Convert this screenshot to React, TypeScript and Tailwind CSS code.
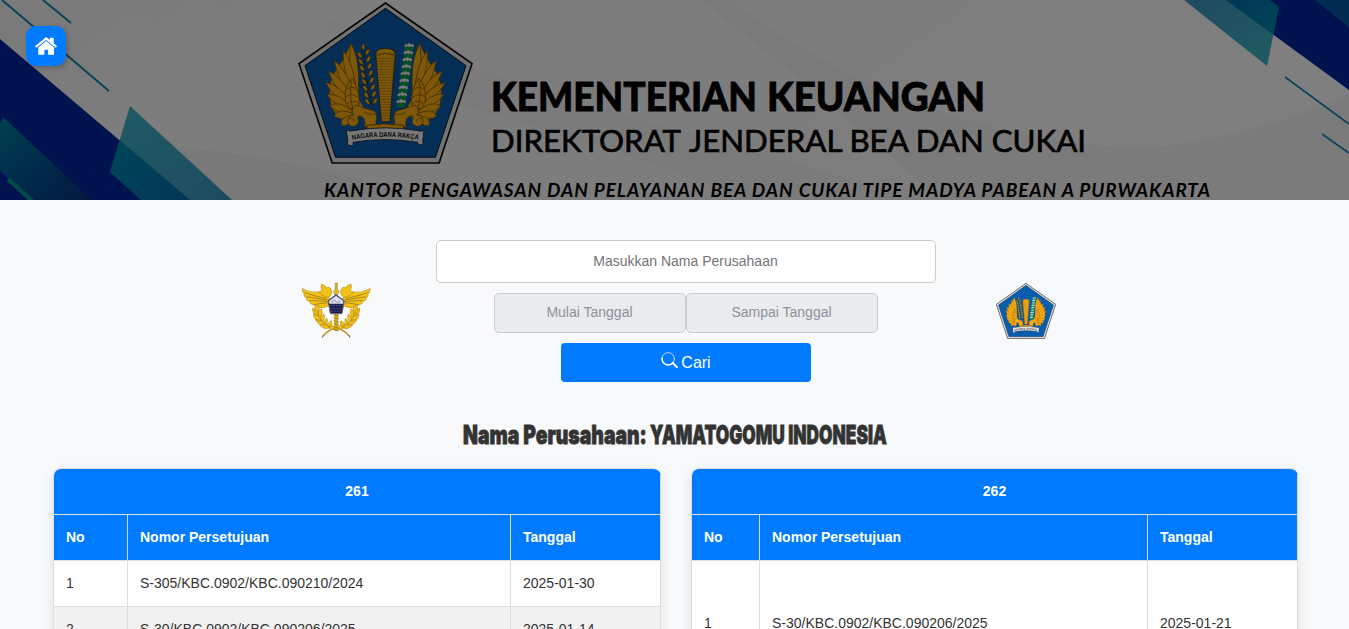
import React from 'react';

const featherTips = [
  [183, 131],
  [160, 152],
  [134, 182],
  [116, 214],
  [108, 249],
  [112, 285],
  [120, 319],
  [133, 350],
  [156, 378],
];

function feather(x: number, y: number, i: number) {
  const rx = 204 - i * 2;
  const ry = 300 + i * 6;
  const dx = x - rx;
  const dy = y - ry;
  const len = Math.hypot(dx, dy);
  const nx = (-dy / len) * 17;
  const ny = (dx / len) * 17;
  return `M${rx} ${ry} Q${rx + dx * 0.5 - nx * 1.3} ${ry + dy * 0.5 - ny * 1.3} ${x} ${y} Q${rx + dx * 0.68 + nx * 1.5} ${ry + dy * 0.68 + ny * 1.5} ${rx} ${ry}Z`;
}

function Wing() {
  return (
    <g fill="#fcae12" stroke="#6b4c08" strokeWidth="2" strokeLinejoin="round">
      <path d="M184 132 Q204 200 209 300 L226 332 L190 372 Q145 368 125 320 Q112 270 130 225 Q160 185 184 132Z" />
      {featherTips.map(([x, y], i) => (
        <path key={i} d={feather(x, y, i)} />
      ))}
      <path d="M187 235 Q160 268 168 308 Q180 334 206 328 Q216 280 187 235Z" />
      <path d="M170 270 Q188 256 200 270 M166 292 Q186 278 204 292 M172 312 Q190 298 207 312 M186 244 Q178 286 190 330" fill="none" />
      <path d="M198 316 Q222 326 252 333 Q266 344 258 366 L262 382 L225 382 Q228 354 214 350 Q202 344 204 356 Q213 372 194 380 Q174 381 174 362 Q176 346 194 346 Q180 334 198 316Z" />
      <path d="M177 358 Q190 350 194 365 M224 336 Q236 346 260 344" fill="none" />
    </g>
  );
}

const grains = Array.from({ length: 9 }, (_, i) => i);

function Emblem({ x, y, width, height }: { x?: number; y?: number; width: number; height: number }) {
  return (
    <svg x={x} y={y} width={width} height={height} viewBox="26 7 522 486" preserveAspectRatio="none">
      <path d="M287 10 L545 192 L447 490 L128 490 L29 192Z" fill="#e4e4e4" stroke="#080808" strokeWidth="5" />
      <path d="M287 26 L527 198 L436 473 L138 473 L47 198Z" fill="#0a5cac" stroke="#101c2c" strokeWidth="3" />
      <Wing />
      <g transform="translate(573 0) scale(-1 1)">
        <Wing />
      </g>
      <path d="M258 165 Q257 147 286 146 Q317 147 316 165 L300 366 L275 366Z" fill="#fcae12" stroke="#3b2c08" strokeWidth="2.5" />
      <path d="M260 169 Q264 160 270 166 Q275 155 281 165 Q287 155 293 165 Q300 156 305 166 Q311 160 314 169" fill="none" stroke="#3b2c08" strokeWidth="2" />
      {Array.from({ length: 23 }, (_, i) => (
        <path
          key={i}
          d={`M${259 + i * 0.72} ${176 + i * 8.2} H${315 - i * 0.67}`}
          stroke="#8a6413"
          strokeWidth="1.6"
        />
      ))}
      <path d="M221 139 Q228 240 249 326" fill="none" stroke="#3b2c08" strokeWidth="2" />
      <g fill="#fcae12" stroke="#3b2c08" strokeWidth="1.8">
        <ellipse cx="221" cy="142" rx="5" ry="9" />
        {grains.slice(0, 8).map((i) => (
          <g key={i}>
            <ellipse cx={210 + i * 3.3} cy={166 + i * 20} rx="5" ry="10" transform={`rotate(-32 ${210 + i * 3.3} ${166 + i * 20})`} />
            <ellipse cx={233 + i * 3.3} cy={157 + i * 21} rx="5" ry="10" transform={`rotate(28 ${233 + i * 3.3} ${157 + i * 21})`} />
          </g>
        ))}
      </g>
      <g>
        <path d="M358 134 L330 325" stroke="#14793f" strokeWidth="8" />
        {grains.map((i) => {
          const cx = 358 - i * 3;
          const cy = 139 + i * 21;
          return (
            <g key={i}>
              <path d={`M${cx - 14} ${cy + 1} H${cx + 14} L${cx + 12} ${cy + 15} Q${cx} ${cy + 20} ${cx - 12} ${cy + 15}Z`} fill="#0f9a48" />
              <path
                d={`M${cx - 15} ${cy + 1} Q${cx - 12} ${cy - 8} ${cx - 5} ${cy - 5} Q${cx} ${cy - 11} ${cx + 5} ${cy - 5} Q${cx + 12} ${cy - 8} ${cx + 15} ${cy + 1} L${cx + 10} ${cy + 4} L${cx + 5} ${cy} L${cx} ${cy + 4} L${cx - 5} ${cy} L${cx - 10} ${cy + 4}Z`}
                fill="#f0f0f0"
              />
            </g>
          );
        })}
      </g>
      <path d="M232 377 Q286 368 341 377 L342 389 Q286 382 231 389Z" fill="#fcae12" stroke="#3b2c08" strokeWidth="2" />
      <path
        d="M170 391 Q178 396 190 393 Q286 376 384 393 Q395 397 402 391 Q399 403 400 410 Q397 422 399 433 Q391 437 382 433 L384 428 Q286 411 190 428 L191 437 Q181 440 173 433 Q177 421 173 412Z"
        fill="#f0f0f0"
        stroke="#222"
        strokeWidth="2.5"
      />
      <path id="motto" d="M188 421 Q286 402 388 421" fill="none" />
      <text fontFamily="Liberation Sans, Arial, sans-serif" fontWeight="700" fontSize="21" fill="#111" textLength="198" lengthAdjust="spacingAndGlyphs">
        <textPath href="#motto">NAGARA DANA RAKÇA</textPath>
      </text>
    </svg>
  );
}

function CustomsHalf() {
  return (
    <g fill="#f2c21a" stroke="#b98c12" strokeWidth="2" strokeLinejoin="round">
      <path d="M37 56 Q60 70 88 66 Q110 68 122 91 L121 104 Q104 116 81 113 Q72 110 72 104 Q59 103 59 95 Q47 92 49 84 Q41 80 43 72 Q36 65 37 56Z" />
      <path d="M44 68 Q78 80 111 86 M50 80 Q80 86 112 90 M60 92 Q84 92 113 94 M72 104 Q94 99 116 98" fill="none" stroke="#8a6a14" strokeWidth="2" />
      <path d="M94 43 Q106 44 109 54 Q121 48 124 61 Q128 74 116 82 Q95 80 88 66 L96 62 Q91 52 94 43Z" />
      <path d="M82 104 Q93 117 82 131 Q64 122 82 104Z M68 115 Q86 120 87 139 Q66 135 68 115Z M94 116 Q101 131 90 141 Q76 129 94 116Z M70 132 Q90 136 95 153 Q71 154 70 132Z M102 132 Q108 147 96 155 Q84 143 102 132Z M77 149 Q98 147 107 163 Q87 171 77 149Z M111 145 Q116 158 105 167 Q95 157 111 145Z M89 166 Q106 157 122 170 Q106 183 89 166Z M124 152 Q130 166 116 173 Q105 162 124 152Z M114 172 Q126 162 136 172 Q127 185 114 172Z" />
      <path d="M137 174 Q113 181 98 199" fill="none" stroke="#c2952a" strokeWidth="4" />
      <path d="M100 196 L97 202" stroke="#554b45" strokeWidth="3" />
    </g>
  );
}

function CustomsLogo() {
  return (
    <svg className="h-20 w-[95px]" viewBox="0 0 285 240">
      <ellipse cx="138" cy="138" rx="42" ry="34" fill="#fff" />
      <CustomsHalf />
      <g transform="translate(277 0) scale(-1 1)">
        <CustomsHalf />
      </g>
      <path d="M136 39 L142 39 L142 59 L148 64 L143 71 L143 182 L134 182 L134 71 L130 64 L136 59Z" fill="#e4b322" stroke="#8f7224" strokeWidth="1.5" />
      {[134, 143, 152, 161, 170, 178].map((y) => (
        <path key={y} d={`M131 ${y} L146 ${y + 4}`} stroke="#b88d14" strokeWidth="4" />
      ))}
      <path d="M138 74 L163 92 L156 131 L121 131 L114 92Z" fill="#1d1f47" stroke="#666878" strokeWidth="3" />
      <path d="M117 93 L138 77 L160 93 L159 101 L118 101Z" fill="#dfe1ee" />
      <path d="M119 106 H157 M121 115 H155 M123 123 H153" stroke="#4a4aa0" strokeWidth="3" strokeDasharray="6 3" />
      <path d="M124 96 L134 91 L141 97 L152 94" stroke="#9196aa" strokeWidth="3" fill="none" />
    </svg>
  );
}

function Banner() {
  return (
    <svg className="block h-[200px] w-[1349px]" viewBox="0 0 1349 200">
      <defs>
        <linearGradient id="teal" x1="0" y1="0" x2="1" y2="1">
          <stop offset="0" stopColor="#00a0b4" />
          <stop offset="1" stopColor="#0076b4" />
        </linearGradient>
        <linearGradient id="tealUnder" x1="0" y1="0" x2="1" y2="1">
          <stop offset="0" stopColor="#00a0b4" />
          <stop offset="1" stopColor="#0070b0" />
        </linearGradient>
        <linearGradient id="tealBack" x1="1" y1="1" x2="0" y2="0">
          <stop offset="0" stopColor="#00a0b4" />
          <stop offset="1" stopColor="#0074ad" />
        </linearGradient>
        <linearGradient id="deep" x1="0" y1="0" x2="1" y2="1">
          <stop offset="0" stopColor="#00809c" />
          <stop offset="0.45" stopColor="#005a98" />
          <stop offset="1" stopColor="#04307c" />
        </linearGradient>
        <linearGradient id="paper" x1="0" y1="0" x2="1" y2="0.2">
          <stop offset="0" stopColor="#f4f4f4" />
          <stop offset="0.22" stopColor="#fbfbfb" />
          <stop offset="0.6" stopColor="#fafafa" />
          <stop offset="1" stopColor="#ffffff" />
        </linearGradient>
        <linearGradient id="fold" x1="0" y1="0" x2="1" y2="0">
          <stop offset="0" stopColor="#f0f0f0" stopOpacity="0" />
          <stop offset="0.4" stopColor="#efefef" />
          <stop offset="1" stopColor="#efefef" />
        </linearGradient>
      </defs>
      <rect width="1349" height="200" fill="url(#paper)" />
      <path d="M60 0 H275 Q420 52 640 120 Q790 160 920 200 H750 Q550 120 60 0Z" fill="url(#fold)" opacity="0.4" />
      <path d="M730 0 Q920 140 1140 148 Q1240 142 1349 94 V200 H940 Q830 100 700 0Z" fill="#f2f2f2" opacity="0.6" />
      <path d="M178 148 Q260 153 350 177 L480 200 H220Z" fill="#f2f2f2" />
      <path d="M0 39 L190 200 H0Z" fill="#00279c" />
      <path d="M3 117 L92 200 H33 L0 171 V124Z" fill="url(#deep)" />
      <path d="M8 179 L33 202" stroke="#009991" strokeWidth="4" />
      <path d="M130 106 L232 200 H141 L110 172Z" fill="url(#teal)" opacity="0.75" />
      <path d="M119.5 140 L190 200 H141 L110 172Z" fill="url(#tealUnder)" opacity="0.5" />
      <path d="M2 0 L109 91 M43 0 L71 23" stroke="#1685a8" strokeWidth="2" />
      <path d="M1226 0 L1349 90 V0Z" fill="#00279c" />
      <path d="M1315 0 L1349 27 V0Z" fill="#0464a5" opacity="0.8" />
      <path d="M1184 0 L1267 66 L1279 7 L1270 0Z" fill="url(#tealBack)" opacity="0.75" />
      <path d="M1226 0 L1273.5 35 L1279 7 L1270 0Z" fill="url(#tealBack)" opacity="0.5" />
      <path d="M1285 77 L1349 124 M1322 134 L1349 153" stroke="#1685b0" strokeWidth="1.7" />
      <Emblem x={298} y={2} width={175} height={162} />
      <g fontFamily="Lato, sans-serif" fill="#000">
        <g fontSize="40" fontWeight="900" stroke="#000" strokeWidth="0.8">
          <text x="491" y="111" textLength="266" lengthAdjust="spacingAndGlyphs">
            KEMENTERIAN
          </text>
          <text x="767" y="111" textLength="218" lengthAdjust="spacingAndGlyphs">
            KEUANGAN
          </text>
        </g>
        <g fontSize="31.5" fontWeight="400" stroke="#000" strokeWidth="0.7">
          <text x="491" y="152" textLength="190" lengthAdjust="spacingAndGlyphs">
            DIREKTORAT
          </text>
          <text x="689" y="152" textLength="397" lengthAdjust="spacingAndGlyphs">
            JENDERAL BEA DAN CUKAI
          </text>
        </g>
        <text x="324" y="197" fontSize="19" fontStyle="italic" fontWeight="700" textLength="886" lengthAdjust="spacing">
          KANTOR PENGAWASAN DAN PELAYANAN BEA DAN CUKAI TIPE MADYA PABEAN A PURWAKARTA
        </text>
      </g>
      <rect width="1349" height="200" fill="#000" opacity="0.5" />
    </svg>
  );
}

function HomeIcon() {
  return (
    <svg className="h-[18px] w-[22px]" viewBox="105 111 67 54.8" fill="#fff">
      <path d="M139 111 L150 120 V113 H162 V130 L172 139 L168 144 L139 120.500 L109 144 L105 139Z" />
      <path d="M139 123 L163 143 V165 H145 V150 H133.500 V165 H115 V143Z" />
    </svg>
  );
}

function SearchIcon() {
  return (
    <svg className="-mt-1 h-[17px] w-[17px]" viewBox="0 0 17 17" fill="none" stroke="#fff" strokeLinecap="round">
      <circle cx="7.2" cy="6.8" r="6.2" strokeWidth="0.7" />
      <path d="M1.2 6 A6.2 6.2 0 0 0 12 10.8" strokeWidth="1.5" />
      <path d="M11.8 11 L15.8 15" strokeWidth="2" />
    </svg>
  );
}

type Row = { no: string; nomor: string; tanggal: string };

function ApprovalTable({ title, rows, wrapper, cols, rowHeight }: { title: string; rows: Row[]; wrapper: string; cols: string[]; rowHeight: string }) {
  const head = 'h-[46px] border-b border-r border-[#ddd] px-3 pt-0 pb-0.5 text-left font-bold';
  const cell = 'border-b border-r border-[#ddd] px-3 pt-0 pb-0.5';
  return (
    <div className={`${wrapper} overflow-hidden rounded-lg border-l border-t border-[#ddd] bg-white shadow-[0_4px_12px_rgba(0,0,0,0.1)]`}>
      <table className="w-full table-fixed border-separate border-spacing-0 text-sm">
        <colgroup>
          {cols.map((c, i) => (
            <col key={i} className={c} />
          ))}
        </colgroup>
        <thead className="bg-[#007bff] text-white">
          <tr>
            <th colSpan={3} className="h-[46px] border-b border-r border-[#ddd] px-0 pt-0 pb-0.5 text-center font-bold">
              {title}
            </th>
          </tr>
          <tr>
            <th className={head}>No</th>
            <th className={head}>Nomor Persetujuan</th>
            <th className={head}>Tanggal</th>
          </tr>
        </thead>
        <tbody>
          {rows.map((r) => (
            <tr key={r.no} className={`${rowHeight} even:bg-[#f1f1f1]`}>
              <td className={cell}>{r.no}</td>
              <td className={cell}>{r.nomor}</td>
              <td className={cell}>{r.tanggal}</td>
            </tr>
          ))}
        </tbody>
      </table>
    </div>
  );
}

export default function App() {
  return (
    <div className="relative h-[629px] w-[1349px] overflow-hidden bg-[#f8f9fb] font-['Liberation_Sans',Arial,sans-serif] text-[#333]">
      <header>
        <Banner />
      </header>
      <a
        href="#"
        aria-label="Beranda"
        className="absolute left-[26px] top-[26px] flex h-10 w-10 items-center justify-center rounded-[10px] bg-[#007bff] text-white shadow-[2px_2px_5px_rgba(0,0,0,0.2)]"
      >
        <HomeIcon />
      </a>

      <section className="flex pl-[290px] pt-10">
        <div className="w-[146px] pt-[30px]">
          <CustomsLogo />
        </div>
        <form className="flex w-[500px] flex-col items-center gap-[10px]">
          <input
            placeholder="Masukkan Nama Perusahaan"
            className="h-[43px] w-full rounded-[5px] border border-[#ccc] bg-white pr-px pb-0.5 text-center text-sm placeholder:text-[#757575]"
          />
          <div className="flex">
            <input disabled placeholder="Mulai Tanggal" className="h-10 w-48 rounded-[5px] border border-[#ccc] bg-[#e9ecef] pr-px pb-0.5 text-center text-sm placeholder:text-[#8b9197]" />
            <input disabled placeholder="Sampai Tanggal" className="h-10 w-48 rounded-[5px] border border-[#ccc] bg-[#e9ecef] pr-px pb-0.5 text-center text-sm placeholder:text-[#8b9197]" />
          </div>
          <button type="button" className="flex h-[39px] w-[250px] items-center justify-center gap-[3px] rounded bg-[#007bff] text-base text-white">
            <SearchIcon />
            Cari
          </button>
        </form>
        <div className="pl-[60px] pt-[43px]">
          <Emblem width={60} height={56} />
        </div>
      </section>

      <h1 className="mt-[34px] flex h-9 items-center whitespace-nowrap pl-[463px] font-['Inter',sans-serif] text-[26px] font-black">
        <span className="w-[187px]">
          <span className="inline-block origin-left scale-x-[0.745] [-webkit-text-stroke:0.8px_#333]">Nama Perusahaan:</span>
        </span>
        <span className="w-[237px]">
          <span className="inline-block origin-left scale-x-[0.666] [-webkit-text-stroke:0.8px_#333]">YAMATOGOMU INDONESIA</span>
        </span>
      </h1>

      <main className="mt-4 flex gap-[30px] pl-[53px]">
        <ApprovalTable
          title="261"
          wrapper="w-[608px]"
          cols={['w-[74px]', 'w-[383px]', 'w-[150px]']}
          rowHeight="h-[46px]"
          rows={[
            { no: '1', nomor: 'S-305/KBC.0902/KBC.090210/2024', tanggal: '2025-01-30' },
            { no: '2', nomor: 'S-30/KBC.0902/KBC.090206/2025', tanggal: '2025-01-14' },
          ]}
        />
        <ApprovalTable
          title="262"
          wrapper="w-[607px]"
          cols={['w-[68px]', 'w-[388px]', 'w-[150px]']}
          rowHeight="h-[126px]"
          rows={[{ no: '1', nomor: 'S-30/KBC.0902/KBC.090206/2025', tanggal: '2025-01-21' }]}
        />
      </main>
    </div>
  );
}
